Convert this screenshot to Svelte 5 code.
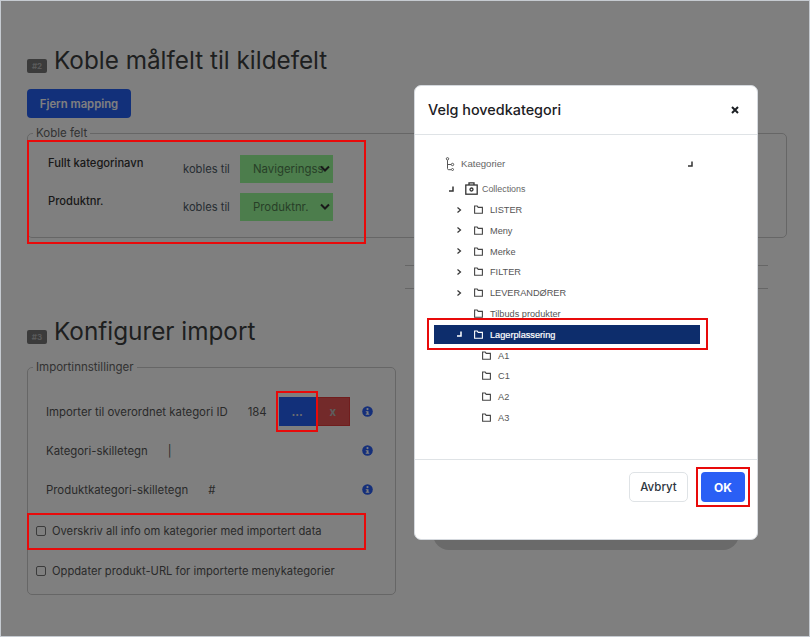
<script>
  const mappings = [
    { name: 'Fullt kategorinavn', value: 'Navigeringssti' },
    { name: 'Produktnr.', value: 'Produktnr.' }
  ];
  const settings = [
    { label: 'Kategori-skilletegn', value: '|', cls: 'w1' },
    { label: 'Produktkategori-skilletegn', value: '#', cls: 'w2' }
  ];
  const nodes = [
    { label: 'LISTER', depth: 1, icon: 'right' },
    { label: 'Meny', depth: 1, icon: 'right' },
    { label: 'Merke', depth: 1, icon: 'right' },
    { label: 'FILTER', depth: 1, icon: 'right' },
    { label: 'LEVERANDØRER', depth: 1, icon: 'right' },
    { label: 'Tilbuds produkter', depth: 1, icon: '' },
    { label: 'Lagerplassering', depth: 1, icon: 'open', selected: true },
    { label: 'A1', depth: 2, icon: '' },
    { label: 'C1', depth: 2, icon: '' },
    { label: 'A2', depth: 2, icon: '' },
    { label: 'A3', depth: 2, icon: '' }
  ];
</script>

{#snippet corner()}
  <svg class="tw" viewBox="0 0 8 8" width="8" height="8"><path d="M6 1.500v4.500H2" fill="none" stroke="currentColor" stroke-width="1.500"/></svg>
{/snippet}
{#snippet chevron()}
  <svg class="tw" viewBox="0 0 8 8" width="8" height="8"><path d="M2.500 1.500l3 2.500-3 2.500" fill="none" stroke="currentColor" stroke-width="1.200"/></svg>
{/snippet}
{#snippet folder()}
  <svg class="folder" viewBox="0 0 9 9" width="9" height="9"><path d="M.6 8.300V1h2.600l1 1.400h4.200v5.900z" fill="none" stroke="currentColor" stroke-width="1.100"/></svg>
{/snippet}
{#snippet info()}
  <svg class="info" viewBox="0 0 11 11" width="11" height="11"><circle cx="5.500" cy="5.500" r="5.300" fill="#2a5ff5"/><circle cx="5.500" cy="3.100" r="1.100" fill="#fff"/><path d="M3.800 5.200h2.700v2.600h.8v1H3.700v-1h.9V6.100h-.8z" fill="#fff"/></svg>
{/snippet}

<div class="frame">
  <main class="page">
    <h2 class="head first"><span class="badge">#2</span>Koble målfelt til kildefelt</h2>
    <button class="primary">Fjern mapping</button>

    <fieldset class="map">
      <legend>Koble felt</legend>
      {#each mappings as m}
        <div class="map-row">
          <span class="src">{m.name}</span>
          <span class="to">kobles til</span>
          <div class="pick"><span class="pick-text">{m.value}</span>
            <svg viewBox="0 0 10 8" width="10" height="8"><path d="M1 1.500l4 4 4-4" fill="none" stroke="currentColor" stroke-width="2"/></svg>
          </div>
        </div>
      {/each}
    </fieldset>

    <div class="rules"><div></div><div></div></div>

    <h2 class="head second"><span class="badge">#3</span>Konfigurer import</h2>

    <fieldset class="imp">
      <legend>Importinnstillinger</legend>
      <div class="set first-set">
        <span class="lab">Importer til overordnet kategori ID</span>
        <span class="num">184</span>
        <button class="sq blue">...</button>
        <button class="sq red">x</button>
        <span class="fill"></span>
        {@render info()}
      </div>
      {#each settings as s}
        <div class="set">
          <span class="lab">{s.label}</span>
          <span class="val">{s.value}</span>
          <span class="fill"></span>
          {@render info()}
        </div>
      {/each}
      <label class="chk c1"><input type="checkbox" /><span>Overskriv all info om kategorier med importert data</span></label>
      <label class="chk c2"><input type="checkbox" /><span>Oppdater produkt-URL for importerte menykategorier</span></label>
    </fieldset>
  </main>

  <div class="backdrop"></div>
  <div class="lump"></div>

  <section class="modal">
    <header class="m-head">
      <h3>Velg hovedkategori</h3>
      <svg viewBox="0 0 8 8" width="8" height="8"><path d="M1 1l6 6M7 1L1 7" stroke="#1c2024" stroke-width="2" fill="none"/></svg>
    </header>
    <div class="m-body">
      <div class="root">
        <svg viewBox="0 0 11 14" width="11" height="14"><g fill="none" stroke="#555" stroke-width="1"><circle cx="2.500" cy="1.800" r="1.200"/><path d="M2.500 3.200v8.300c0 .8.400 1.200 1.200 1.200h2.300M2.500 7.500h3.500"/><circle cx="7.500" cy="7.500" r="1.200"/><circle cx="7.500" cy="12.500" r="1"/></g></svg>
        <span>Kategorier</span>
        <span class="fill"></span>
        <span class="root-corner">{@render corner()}</span>
      </div>
      <div class="coll">
        <span class="coll-corner">{@render corner()}</span>
        <svg viewBox="0 0 13 13" width="13" height="13"><g fill="none" stroke="#333" stroke-width="1.300"><rect x=".8" y="3" width="11.400" height="9.200"/><path d="M4 3V.9h5V3"/><circle cx="6.500" cy="7.500" r="1.500"/></g></svg>
        <span>Collections</span>
      </div>
      {#each nodes as n}
        <div class="node d{n.depth}" class:selected={n.selected}>
          <span class="twist">
            {#if n.icon === 'right'}{@render chevron()}{:else if n.icon === 'open'}{@render corner()}{/if}
          </span>
          {@render folder()}
          <span class="tx">{n.label}</span>
        </div>
      {/each}
    </div>
    <footer class="m-foot">
      <button class="ghost">Avbryt</button>
      <button class="ok">OK</button>
    </footer>
  </section>

  <div class="mark m1"></div>
  <div class="mark m2"></div>
  <div class="mark m3"></div>
  <div class="mark m4"></div>
  <div class="mark m5"></div>
</div>

<style>
  :global(body) { margin: 0; }
  .frame {
    position: relative; width: 810px; height: 637px; overflow: hidden; box-sizing: border-box;
    border: 1px solid #c6cbd1; background: #fff;
    font-family: Inter, "Liberation Sans", sans-serif; color: #555;
  }
  .page { padding: 0 0 0 26px; }
  .backdrop { position: absolute; inset: 0; background: rgba(0,0,0,.5); }
  .head { margin: 0; font-size: 24.300px; font-weight: 400; line-height: 30px; color: #3c3e40; display: flex; align-items: flex-end; }
  .head.first { padding-top: 44px; }
  .head.second { margin-top: 5px; }
  .badge { width: 20px; height: 14px; margin: 0 7px 2px 0; border-radius: 2px; background: #777; color: #b5b5b5; font-size: 8px; font-weight: 700; line-height: 14px; text-align: center; }
  button { font-family: inherit; cursor: pointer; border: 0; padding: 0; }
  .primary { display: block; margin-top: 14px; width: 104px; height: 29px; border-radius: 4px; background: #2560f5; color: #fff; font-size: 11.300px; font-weight: 600; }
  fieldset { margin: 0; box-sizing: border-box; border: 1px solid #ccc; border-radius: 5px; padding: 0; }
  legend { margin-left: 5px; padding: 0 3px; font-size: 11.500px; line-height: 12px; color: #666; }
  .map { margin-top: 9px; width: 760px; height: 111px; }
  .map-row { display: flex; height: 28px; margin-top: 10px; margin-left: 20px; align-items: center; }
  .map-row:first-of-type { margin-top: 16px; }
  .src { width: 135px; font-size: 11.200px; font-weight: 450; color: #333; margin-top: -12px; }
  .to { width: 57px; font-size: 11.200px; color: #4d5a66; }
  .pick { position: relative; width: 93px; height: 28px; box-sizing: border-box; padding-right: 9px; background: #98fb98; color: #507f50; font-size: 11.400px; line-height: 28px; overflow: hidden; }
  .pick-text { display: block; padding-left: 13px; white-space: nowrap; overflow: hidden; }
  .pick svg { position: absolute; right: 3px; top: 10px; color: #333; }
  .rules { margin: 27px 0 0 378px; width: 363px; }
  .rules div { height: 22px; border-top: 1px solid #ccc; }
  .imp { margin-top: 15px; width: 369px; height: 234px; }
  .set { display: flex; align-items: center; height: 27px; margin-left: 18px; margin-top: 12px; padding-right: 22px; font-size: 11.400px; color: #555; }
  .first-set { margin-top: 25px; }
  .lab { white-space: nowrap; }
  .num { margin-left: 20px; margin-right: 12px; }
  .val { margin-left: 20px; }
  .sq { width: 37px; height: 29px; font-size: 11.400px; font-weight: 700; color: #ddd; box-sizing: border-box; }
  .blue { background: #2560f5; }
  .red { width: 34px; background: #e65454; border: 1px solid #e03a3a; color: #bbb; }
  .fill { flex: 1; }
  .info { display: block; }
  .chk { display: flex; align-items: center; gap: 6px; margin-left: 8px; font-size: 11.200px; color: #555; height: 20px; }
  .chk input { appearance: none; margin: 0; width: 10px; height: 10px; box-sizing: border-box; border: 1px solid #777; border-radius: 2px; }
  .c1 { margin-top: 18px; }
  .c2 { margin-top: 20px; }

  .lump { position: absolute; left: 432px; top: 500px; width: 306px; height: 49px; border-radius: 16px; background: #6a6a6a; }
  .modal { position: absolute; left: 413px; top: 84px; width: 344px; height: 455px; box-sizing: border-box; background: #fff; border-radius: 7px; border: 1px solid #d5d9de; display: flex; flex-direction: column; }
  .m-head { flex: none; height: 49px; box-sizing: border-box; border-bottom: 1px solid #dfe3e6; display: flex; align-items: center; justify-content: space-between; padding: 0 18px 1px 13px; }
  .m-head h3 { margin: 0; font-size: 14.400px; font-weight: 500; color: #1c2024; }
  .m-body { flex: 1; padding: 20px 0 0 19px; font-family: "Liberation Sans", Arial, sans-serif; font-size: 9.200px; color: #666; }
  .root { display: flex; align-items: center; gap: 5px; height: 17px; padding-left: 11px; box-sizing: border-box; width: 260px; font-size: 9.600px; }
  .root-corner { color: #333; display: flex; }
  .coll { display: flex; align-items: center; height: 17px; margin-top: 8px; padding-left: 13px; font-size: 8.900px; }
  .coll-corner { display: flex; width: 18px; color: #333; }
  .coll > span:last-child { margin-left: 4px; }
  .node { display: flex; align-items: center; height: 19px; margin-top: 1.800px; width: 266px; color: #555; }
  .coll + .node { margin-top: 3px; }
  .tw { display: block; }
  .twist { display: flex; width: 19px; color: #333; }
  .folder { color: #444; flex: none; }
  .tx { margin-left: 7px; position: relative; top: .5px; }
  .d1 { padding-left: 21px; box-sizing: border-box; }
  .d2 { padding-left: 29px; box-sizing: border-box; }
  .selected { background: #0d2d6c; color: #fff; }
  .selected .tx { -webkit-text-stroke: .2px #fff; }
  .selected .twist, .selected .folder { color: #fff; }
  .m-foot { flex: none; height: 80px; box-sizing: border-box; border-top: 1px solid #dfe3e6; padding: 12px 12px 0 0; display: flex; justify-content: flex-end; align-items: flex-start; gap: 13px; }
  .ghost { width: 59px; height: 30px; border: 1px solid #dfe3e6; border-radius: 5px; background: #fff; color: #2d3640; font-size: 11.500px; font-weight: 500; }
  .ok { width: 44px; height: 30px; border-radius: 4px; background: #2a5ff5; color: #fff; font-size: 12px; font-weight: 700; }

  .mark { position: absolute; box-sizing: border-box; border: 2px solid #e80a0a; }
  .m1 { left: 26px; top: 139px; width: 339px; height: 104px; }
  .m2 { left: 275px; top: 390px; width: 42px; height: 41px; }
  .m3 { left: 26px; top: 512px; width: 339px; height: 37px; }
  .m4 { left: 426px; top: 317px; width: 281px; height: 32px; }
  .m5 { left: 695px; top: 466px; width: 54px; height: 40px; }
</style>
